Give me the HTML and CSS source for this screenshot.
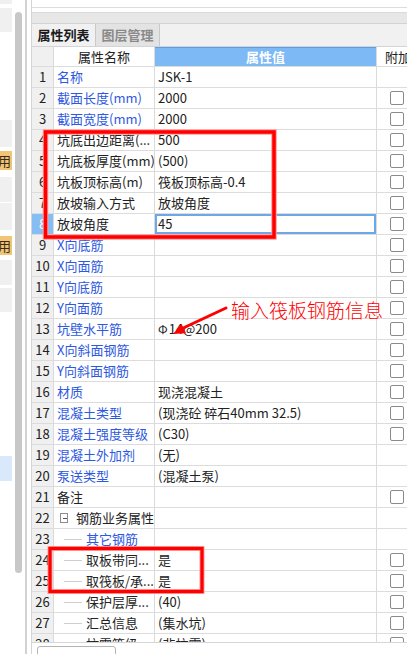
FILE: index.html
```html
<!DOCTYPE html>
<html lang="zh-CN">
<head>
    <meta charset="UTF-8">
    <meta name="viewport" content="width=device-width, initial-scale=1.0">
    <title>属性列表</title>
    <link rel="stylesheet" href="styles.css">
</head>
<body>
    <div class="app">
        <div class="side">
            <div class="side-list">
                <div class="blk b1"></div>
                <div class="blk b2"></div>
                <div class="blk b3"></div>
                <div class="badge b4"><span>用</span></div>
                <div class="blk b5"></div>
                <div class="blk b6"></div>
                <div class="badge b7"><span>用</span></div>
                <div class="blk b8"></div>
                <div class="blk b9"></div>
                <div class="blk sel"></div>
            </div>
            <div class="side-scroll"><div class="thumb"></div></div>
        </div>

        <div class="main">
            <div class="top-box"></div>
            <div class="bar"></div>
            <div class="tabs">
                <div class="tab active">属性列表</div>
                <div class="tab">图层管理</div>
            </div>

            <div class="grid">
                <div class="row head">
                    <div class="num"></div>
                    <div class="name">属性名称</div>
                    <div class="val">属性值</div>
                    <div class="extra">附加</div>
                </div>
                <div class="row"><div class="num">1</div><div class="name link">名称</div><div class="val">JSK-1</div><div class="extra"></div></div>
                <div class="row"><div class="num">2</div><div class="name link">截面长度(mm)</div><div class="val">2000</div><div class="extra"><span class="chk"></span></div></div>
                <div class="row"><div class="num">3</div><div class="name link">截面宽度(mm)</div><div class="val">2000</div><div class="extra"><span class="chk"></span></div></div>
                <div class="row"><div class="num">4</div><div class="name">坑底出边距离(...</div><div class="val">500</div><div class="extra"><span class="chk"></span></div></div>
                <div class="row"><div class="num">5</div><div class="name">坑底板厚度(mm)</div><div class="val">(500)</div><div class="extra"><span class="chk"></span></div></div>
                <div class="row"><div class="num">6</div><div class="name">坑板顶标高(m)</div><div class="val">筏板顶标高-0.4</div><div class="extra"><span class="chk"></span></div></div>
                <div class="row"><div class="num">7</div><div class="name">放坡输入方式</div><div class="val">放坡角度</div><div class="extra"><span class="chk"></span></div></div>
                <div class="row current"><div class="num">8</div><div class="name">放坡角度</div><div class="val">45</div><div class="extra"><span class="chk"></span></div></div>
                <div class="row"><div class="num">9</div><div class="name link">X向底筋</div><div class="val"></div><div class="extra"><span class="chk"></span></div></div>
                <div class="row"><div class="num">10</div><div class="name link">X向面筋</div><div class="val"></div><div class="extra"><span class="chk"></span></div></div>
                <div class="row"><div class="num">11</div><div class="name link">Y向底筋</div><div class="val"></div><div class="extra"><span class="chk"></span></div></div>
                <div class="row"><div class="num">12</div><div class="name link">Y向面筋</div><div class="val"></div><div class="extra"><span class="chk"></span></div></div>
                <div class="row"><div class="num">13</div><div class="name link">坑壁水平筋</div><div class="val"><span class="bar-sym">Φ</span>14@200</div><div class="extra"><span class="chk"></span></div></div>
                <div class="row"><div class="num">14</div><div class="name link">X向斜面钢筋</div><div class="val"></div><div class="extra"><span class="chk"></span></div></div>
                <div class="row"><div class="num">15</div><div class="name link">Y向斜面钢筋</div><div class="val"></div><div class="extra"><span class="chk"></span></div></div>
                <div class="row"><div class="num">16</div><div class="name link">材质</div><div class="val">现浇混凝土</div><div class="extra"><span class="chk"></span></div></div>
                <div class="row"><div class="num">17</div><div class="name link">混凝土类型</div><div class="val">(现浇砼 碎石40mm 32.5)</div><div class="extra"><span class="chk"></span></div></div>
                <div class="row"><div class="num">18</div><div class="name link">混凝土强度等级</div><div class="val">(C30)</div><div class="extra"><span class="chk"></span></div></div>
                <div class="row"><div class="num">19</div><div class="name link">混凝土外加剂</div><div class="val">(无)</div><div class="extra"></div></div>
                <div class="row"><div class="num">20</div><div class="name link">泵送类型</div><div class="val">(混凝土泵)</div><div class="extra"></div></div>
                <div class="row"><div class="num">21</div><div class="name">备注</div><div class="val"></div><div class="extra"><span class="chk"></span></div></div>
                <div class="row"><div class="num">22</div><div class="name group"><span class="fold"></span>钢筋业务属性</div><div class="val"></div><div class="extra"></div></div>
                <div class="row"><div class="num">23</div><div class="name child link"><span class="branch"></span>其它钢筋</div><div class="val"></div><div class="extra"></div></div>
                <div class="row"><div class="num">24</div><div class="name child"><span class="branch"></span>取板带同...</div><div class="val">是</div><div class="extra"><span class="chk"></span></div></div>
                <div class="row"><div class="num">25</div><div class="name child"><span class="branch"></span>取筏板/承...</div><div class="val">是</div><div class="extra"><span class="chk"></span></div></div>
                <div class="row"><div class="num">26</div><div class="name child"><span class="branch"></span>保护层厚...</div><div class="val">(40)</div><div class="extra"><span class="chk"></span></div></div>
                <div class="row"><div class="num">27</div><div class="name child"><span class="branch"></span>汇总信息</div><div class="val">(集水坑)</div><div class="extra"><span class="chk"></span></div></div>
                <div class="row"><div class="num">28</div><div class="name child"><span class="branch"></span>抗震等级</div><div class="val">(非抗震)</div><div class="extra"><span class="chk"></span></div></div>
            </div>

            <div class="footer">
                <button class="btn">一 显示设置</button>
            </div>
        </div>
    </div>

    <!-- annotations drawn over the screenshot -->
    <svg class="marks" width="407" height="654" viewBox="0 0 407 654">
        <g fill="none" stroke-linejoin="miter">
            <rect x="45.5" y="132" width="228.5" height="105" stroke="#ff9a9a" stroke-width="5.5"/>
            <rect x="45.5" y="132" width="228.5" height="105" stroke="#ff0000" stroke-width="3.5"/>
            <rect x="50" y="548.5" width="152" height="43" stroke="#ff9a9a" stroke-width="5"/>
            <rect x="50" y="548.5" width="152" height="43" stroke="#ff0000" stroke-width="3.2"/>
            <line x1="226" y1="308" x2="180" y2="329.5" stroke="#ff0000" stroke-width="3" stroke-linecap="round"/>
        </g>
        <polygon points="173,334 181.5,323.8 186,333.2" fill="#ff0000"/>
    </svg>
    <div class="note">输入筏板钢筋信息</div>
</body>
</html>
```

FILE: styles.css
```css
html, body {
    margin: 0;
    padding: 0;
}
body {
    position: relative;
    width: 407px;
    height: 654px;
    overflow: hidden;
    background: #fff;
    font-family: "Noto Sans CJK SC", "Noto Sans", sans-serif;
    font-size: 13px;
    color: #222;
}
.app {
    display: flex;
    height: 654px;
}

/* left strip */
.side {
    display: flex;
    width: 25px;
    border-right: 2px solid #d2d2d2;
    flex-shrink: 0;
}
.side-list {
    width: 12px;
    display: flex;
    flex-direction: column;
}
.blk {
    background: #f0f0f0;
}
.b1 { height: 4px; }
.b2 { height: 24px; margin-top: 4px; }
.b3 { height: 27px; margin-top: 88px; }
.b5 { height: 25px; margin-top: 7px; }
.b6 { height: 27px; margin-top: 1px; }
.b8 { height: 25px; margin-top: 5px; }
.b9 { height: 24px; margin-top: 3px; }
.sel {
    height: 25px;
    margin-top: 144px;
    background: #d9e8fb;
}
.badge {
    height: 19px;
    background: #f0c578;
    overflow: hidden;
    font-size: 13px;
    line-height: 19px;
    color: #3a2a10;
}
.badge span {
    display: block;
    margin-left: -2px;
}
.b4 { margin-top: 4px; }
.b7 { margin-top: 6px; }
.side-scroll {
    width: 13px;
}
.thumb {
    width: 7px;
    height: 561px;
    margin: 12px 0 0 3px;
    background: #c8c8c8;
    border-radius: 4px;
}

/* right panel */
.main {
    flex: 1;
    margin-left: 4px;
    border-left: 1px solid #d4d4d4;
    overflow: hidden;
    min-width: 0;
}
.top-box {
    height: 7px;
    border-bottom: 1px solid #dcdcdc;
}
.bar {
    height: 10px;
    margin-top: 4px;
    background: #e7e7e7;
    border-top: 1px solid #dadada;
    border-bottom: 1px solid #d2d2d2;
}
.tabs {
    display: flex;
    height: 22px;
    background: #f1f1f1;
}
.tab {
    width: 63px;
    border-right: 1px solid #c9c9c9;
    text-align: center;
    line-height: 22px;
    font-weight: bold;
    color: #8a8a8a;
    background: #e3e3e3;
}
.tab.active {
    color: #1a1a1a;
    background: #f1f1f1;
}

/* property grid */
.grid {
    height: 596px;
    overflow: hidden;
    border-bottom: 1px solid #d6d6d6;
}
.row {
    display: grid;
    grid-template-columns: 22px 101px 222px 60px;
    height: 21px;
    box-sizing: border-box;
    border-bottom: 1px solid #dcdcdc;
    line-height: 20px;
    white-space: nowrap;
}
.row > div {
    border-right: 1px solid #dadada;
    overflow: hidden;
}
.num {
    background: #f0f0f0;
    text-align: center;
    color: #222;
}
.name {
    padding-left: 3px;
}
.val {
    padding-left: 3px;
}
.link {
    color: #2d58e0;
}
.head {
    border-top: 1px solid #d4d4d4;
}
.head .name {
    padding-left: 0;
    text-align: center;
}
.head .val {
    padding-left: 0;
    text-align: center;
    background: #7cb9f5;
    color: #fff;
    font-weight: bold;
    box-shadow: inset 0 1px 0 #5d9ee6;
}
.head .extra {
    padding-left: 8px;
}
.current .num {
    background: #86bef4;
    color: #fff;
}
.current .val {
    box-shadow: inset 0 0 0 2px #6da7e6;
}
.chk {
    display: block;
    width: 12px;
    height: 12px;
    margin: 3px 0 0 13px;
    border: 1px solid #8a8a8a;
    border-radius: 2px;
    background: #fff;
}
.bar-sym {
    font-size: 12px;
    margin-right: 1px;
}

/* tree rows */
.group {
    display: flex;
    align-items: center;
}
.fold {
    position: relative;
    width: 8px;
    height: 8px;
    margin: 0 8px 0 3px;
    border: 1px solid #8c8c8c;
}
.fold::after {
    content: "";
    position: absolute;
    left: 2px;
    top: 3.5px;
    width: 4px;
    height: 1px;
    background: #555;
}
.child {
    display: flex;
    align-items: center;
}
.branch {
    width: 18px;
    height: 1px;
    margin: 0 4px 0 7px;
    background: #cfcfcf;
    flex-shrink: 0;
}

.footer {
    padding: 3px 0 0 5px;
}
.btn {
    width: 79px;
    height: 22px;
    border: 1px solid #b4b4b4;
    border-radius: 3px;
    background: #fff;
    font-family: "Noto Sans CJK SC", sans-serif;
    font-size: 13px;
    padding: 4px 0 0;
    color: #333;
    text-align: center;
    vertical-align: top;
}

/* annotations */
.marks {
    position: absolute;
    left: 0;
    top: 0;
    pointer-events: none;
}
.note {
    position: absolute;
    left: 231px;
    top: 297px;
    font-weight: 300;
    font-size: 19px;
    line-height: 26px;
    color: #ff0000;
    white-space: nowrap;
}
```
